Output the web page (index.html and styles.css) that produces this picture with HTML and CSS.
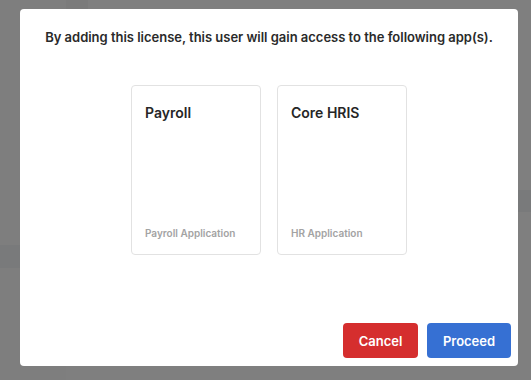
FILE: index.html
```html
<!DOCTYPE html>
<html lang="en">
<head>
  <meta charset="UTF-8" />
  <meta name="viewport" content="width=device-width, initial-scale=1.0"/>
  <title>Add License</title>
  <link rel="stylesheet" href="styles.css">
</head>
<body>
  <div class="page">
    <div class="sidebar"><div class="side-row"></div></div>
    <div class="main"><div class="main-tab"></div><div class="main-row"></div></div>
  </div>
  <div class="backdrop">
    <div class="modal">
      <p class="message">By adding this license, this user will gain access to the following app(s).</p>
      <div class="apps">
        <div class="app-card">
          <div class="app-name">Payroll</div>
          <div class="app-type">Payroll Application</div>
        </div>
        <div class="app-card">
          <div class="app-name">Core HRIS</div>
          <div class="app-type">HR Application</div>
        </div>
      </div>
      <div class="actions">
        <button class="btn btn-cancel">Cancel</button>
        <button class="btn btn-proceed">Proceed</button>
      </div>
    </div>
  </div>
</body>
</html>
```

FILE: styles.css
```css
body { margin: 0; font-family: Inter, "Noto Sans", sans-serif; background: #fff; height: 380px; overflow: hidden; }
.page { display: flex; height: 380px; }
.sidebar { width: 66px; background: #fdfdfd; display: flex; flex-direction: column; padding-top: 245px; box-sizing: border-box; }
.side-row { height: 23px; background: #f2f4f6; }
.main { flex: 1; display: flex; flex-direction: column; }
.main-tab { width: 22px; height: 40px; background: #f6f6f6; }
.main-row { margin-top: 150px; height: 22px; background: #f3f4f6; }
.backdrop { position: fixed; inset: 0; background: rgba(0,0,0,0.5); }
.modal { position: absolute; left: 20px; top: 9px; width: 498px; height: 357px; box-sizing: border-box; background: #fff; border-radius: 4px; display: flex; flex-direction: column; padding: 20px 7px 8px; }
.message { margin: 0; text-align: center; font-size: 13px; font-weight: 600; color: #2a2a2a; letter-spacing: -0.02px; }
.apps { display: flex; justify-content: center; gap: 16px; margin-top: 40px; }
.app-card { width: 130px; height: 170px; box-sizing: border-box; border: 1px solid #e2e2e2; border-radius: 4px; padding: 18px 13px 15px; display: flex; flex-direction: column; justify-content: space-between; }
.app-name { font-size: 14px; font-weight: 600; color: #262626; }
.app-type { font-size: 10px; font-weight: 600; color: #a3a3a3; }
.actions { margin-top: auto; display: flex; justify-content: flex-end; gap: 9px; }
.btn { height: 35px; border: none; border-radius: 4px; color: #fff; font-family: inherit; font-size: 13px; font-weight: 600; cursor: pointer; }
.btn-cancel { width: 75px; background: #d52e2e; }
.btn-proceed { width: 84px; background: #3670d3; }
```
